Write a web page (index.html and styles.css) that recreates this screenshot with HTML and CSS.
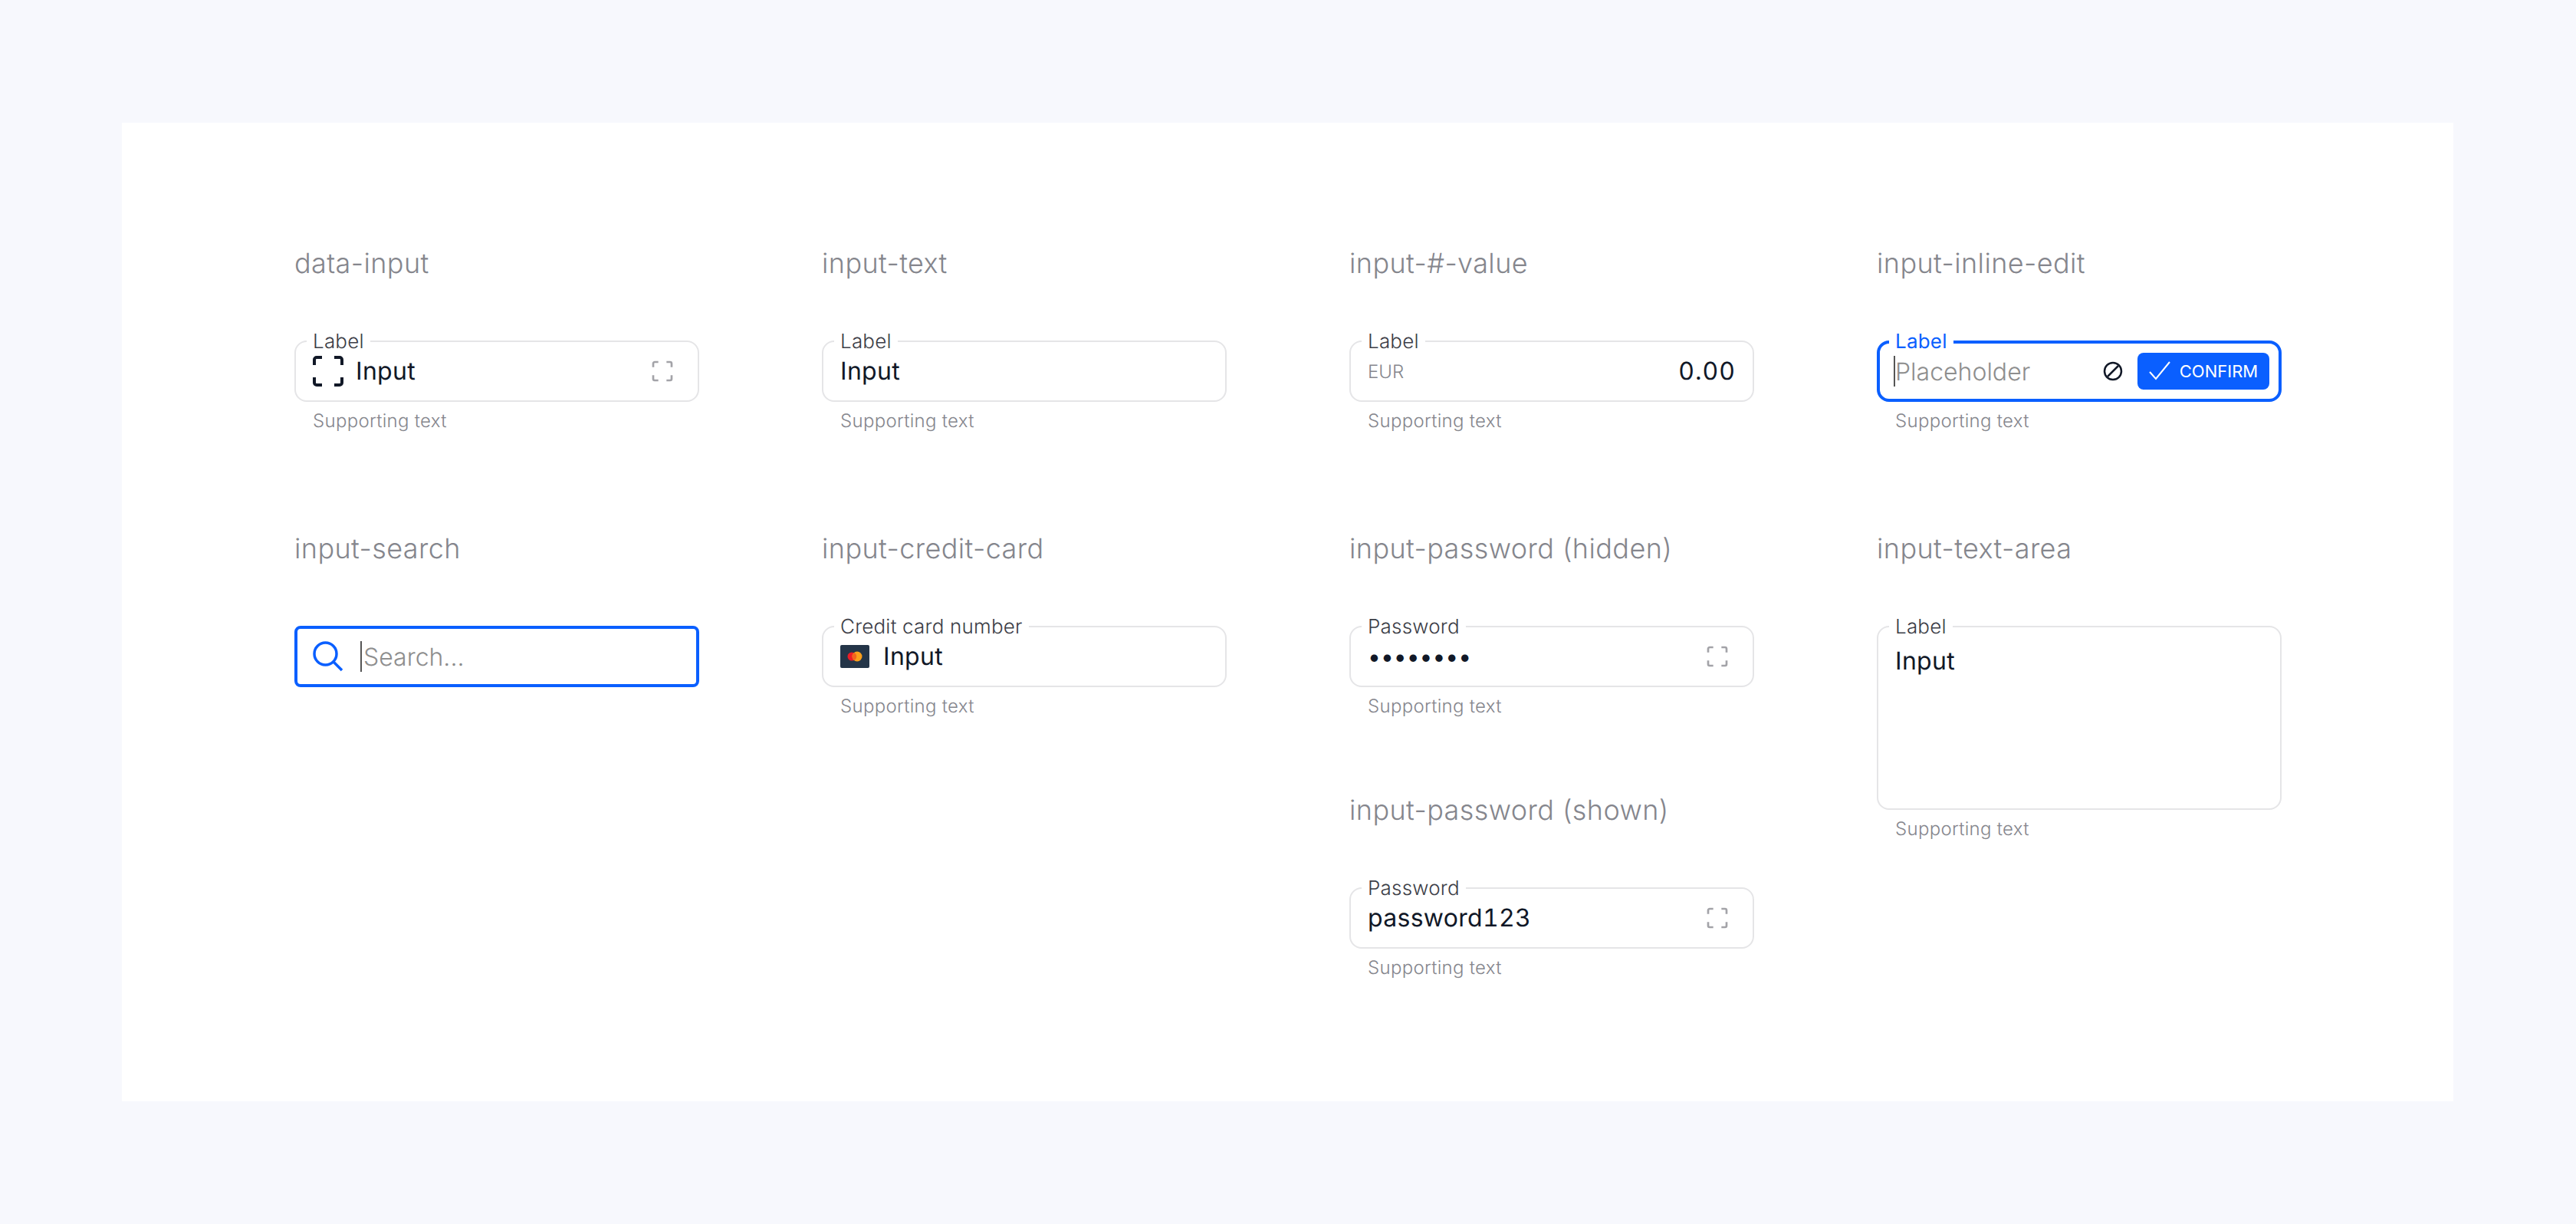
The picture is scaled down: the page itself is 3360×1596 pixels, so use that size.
FILE: index.html
```html
<!DOCTYPE html>
<html lang="en">
<head>
    <meta charset="UTF-8">
    <meta name="viewport" content="width=device-width, initial-scale=1.0">
    <title>Input components</title>
    <link rel="stylesheet" href="styles.css">
</head>
<body>
    <svg class="icon-defs" width="0" height="0" aria-hidden="true">
        <symbol id="frame" viewBox="0 0 24 24">
            <path d="M3 8V4.500A1.500 1.500 0 0 1 4.500 3H8M16 3h3.500A1.500 1.500 0 0 1 21 4.500V8M21 16v3.500a1.500 1.500 0 0 1-1.500 1.500H16M8 21H4.500A1.500 1.500 0 0 1 3 19.500V16" fill="none" stroke="currentColor" stroke-width="2"/>
        </symbol>
    </svg>

    <main class="panel">
        <section class="item">
            <h2>data-input</h2>
            <div class="field">
                <span class="field-label">Label</span>
                <svg class="icon-lead"><use href="#frame"/></svg>
                <span class="value">Input</span>
                <svg class="icon-trail"><use href="#frame"/></svg>
            </div>
            <p class="help">Supporting text</p>
        </section>

        <section class="item">
            <h2>input-text</h2>
            <div class="field">
                <span class="field-label">Label</span>
                <span class="value">Input</span>
            </div>
            <p class="help">Supporting text</p>
        </section>

        <section class="item">
            <h2>input-#-value</h2>
            <div class="field">
                <span class="field-label">Label</span>
                <span class="unit">EUR</span>
                <span class="value value-right">0.00</span>
            </div>
            <p class="help">Supporting text</p>
        </section>

        <section class="item">
            <h2>input-inline-edit</h2>
            <div class="field field-active field-edit">
                <span class="field-label">Label</span>
                <span class="caret"></span>
                <span class="placeholder">Placeholder</span>
                <svg class="icon-cancel" viewBox="0 0 28 28">
                    <circle cx="14" cy="14" r="11" fill="none" stroke="currentColor" stroke-width="2.500"/>
                    <path d="M7 21 21 7" fill="none" stroke="currentColor" stroke-width="2.500"/>
                </svg>
                <button class="btn-confirm">
                    <svg class="icon-check" viewBox="0 0 28 28"><path d="M1 15l8 9L27 2" fill="none" stroke="currentColor" stroke-width="2"/></svg>
                    CONFIRM
                </button>
            </div>
            <p class="help">Supporting text</p>
        </section>

        <section class="item">
            <h2>input-search</h2>
            <div class="field field-active field-search">
                <svg class="icon-search" viewBox="0 0 40 40">
                    <circle cx="16.500" cy="16.500" r="14.500" fill="none" stroke="currentColor" stroke-width="3.500"/>
                    <path d="M27 27 38 38" fill="none" stroke="currentColor" stroke-width="3.500"/>
                </svg>
                <span class="caret"></span>
                <span class="placeholder">Search...</span>
            </div>
        </section>

        <section class="item">
            <h2>input-credit-card</h2>
            <div class="field">
                <span class="field-label">Credit card number</span>
                <svg class="card-logo" viewBox="0 0 38 30">
                    <rect width="38" height="30" rx="2" fill="#243548"/>
                    <circle cx="15" cy="15" r="5.500" fill="#eb1c26"/>
                    <circle cx="22" cy="15" r="6.500" fill="#f99f1b"/>
                    <path d="M18 10a6.500 6.500 0 0 0 0 10 5.500 5.500 0 0 0 0-10z" fill="#f0641f"/>
                </svg>
                <span class="value">Input</span>
            </div>
            <p class="help">Supporting text</p>
        </section>

        <section class="item">
            <h2>input-password (hidden)</h2>
            <div class="field">
                <span class="field-label">Password</span>
                <span class="value value-dots">••••••••</span>
                <svg class="icon-trail"><use href="#frame"/></svg>
            </div>
            <p class="help">Supporting text</p>
        </section>

        <section class="item item-tall">
            <h2>input-text-area</h2>
            <div class="field field-area">
                <span class="field-label">Label</span>
                <span class="value">Input</span>
            </div>
            <p class="help">Supporting text</p>
        </section>

        <section class="item item-third">
            <h2>input-password (shown)</h2>
            <div class="field">
                <span class="field-label">Password</span>
                <span class="value">password123</span>
                <svg class="icon-trail"><use href="#frame"/></svg>
            </div>
            <p class="help">Supporting text</p>
        </section>
    </main>
</body>
</html>
```

FILE: styles.css
```css
body {
    margin: 0;
    height: 1596px;
    padding: 160px 160px 0 159px;
    box-sizing: border-box;
    background-color: #f7f8fd;
    font-family: Inter, "Liberation Sans", sans-serif;
    text-rendering: geometricPrecision;
    color: #111827;
    overflow: hidden;
}
.icon-defs {
    display: block;
}
.panel {
    box-sizing: border-box;
    height: 1276px;
    padding: 161px 0 0 225px;
    background-color: white;
    display: grid;
    grid-template-columns: repeat(4, 528px);
    grid-template-rows: 372px 341px auto;
    column-gap: 160px;
}
.item-tall {
    grid-row: span 2;
}
.item-third {
    grid-column: 3;
    grid-row: 3;
}
.item h2 {
    margin: 0 0 79px;
    font-size: 36px;
    line-height: 44px;
    font-weight: 300;
    letter-spacing: 0.400px;
    color: #85868d;
}
.field {
    position: relative;
    box-sizing: border-box;
    height: 80px;
    padding: 0 22px;
    border: 2px solid #e5e5e7;
    border-radius: 16px;
    display: flex;
    align-items: center;
}
.field-label {
    position: absolute;
    top: -15px;
    left: 14px;
    padding: 0 8px;
    background-color: white;
    font-size: 26px;
    line-height: 30px;
    font-weight: 300;
    letter-spacing: 0.200px;
    color: #3c3e47;
}
.value {
    font-size: 32px;
    line-height: 40px;
    letter-spacing: 0.300px;
    font-variant-numeric: tabular-nums;
    color: #111827;
}
.value-right {
    margin-left: auto;
    letter-spacing: 1px;
}
.value-dots {
    font-size: 30px;
    letter-spacing: 0;
    margin-top: 2px;
}
.unit {
    font-size: 24px;
    font-weight: 300;
    color: #85868d;
}
.help {
    margin: 9px 0 0 24px;
    font-size: 24px;
    line-height: 32px;
    font-weight: 300;
    letter-spacing: 0.300px;
    color: #85868d;
}
.icon-lead {
    width: 48px;
    height: 48px;
    margin: 0 12px 0 -4px;
    color: #111827;
}
.icon-trail {
    width: 32px;
    height: 32px;
    margin-left: auto;
    margin-right: 8px;
    color: #a3a3a8;
}
.field-active {
    border: 4px solid #0a5fff;
}
.field-active .field-label {
    top: -17px;
    left: 12px;
    color: #0a5fff;
    font-weight: 400;
}
.caret {
    width: 2px;
    height: 40px;
    background-color: #555;
    flex-shrink: 0;
}
.placeholder {
    font-size: 32px;
    font-weight: 300;
    color: #8e8e8e;
}
.field-edit {
    padding: 0 12px 0 18px;
}
.icon-cancel {
    width: 28px;
    height: 28px;
    margin-left: auto;
    margin-right: 18px;
    color: #111827;
}
.btn-confirm {
    height: 48px;
    width: 172px;
    padding: 0;
    border: none;
    border-radius: 8px;
    background-color: #0a5fff;
    color: white;
    font-family: inherit;
    font-size: 22px;
    font-weight: 400;
    display: flex;
    align-items: center;
    justify-content: center;
    gap: 12px;
}
.icon-check {
    width: 28px;
    height: 28px;
}
.field-search {
    border-radius: 8px;
    padding: 0 22px 0 20px;
}
.icon-search {
    width: 40px;
    height: 40px;
    margin-right: 22px;
    color: #0a5fff;
}
.field-search .placeholder {
    margin-left: 2px;
}
.card-logo {
    width: 38px;
    height: 30px;
    margin-right: 18px;
}
.field-area {
    height: 240px;
    align-items: flex-start;
    padding-top: 24px;
}
```
